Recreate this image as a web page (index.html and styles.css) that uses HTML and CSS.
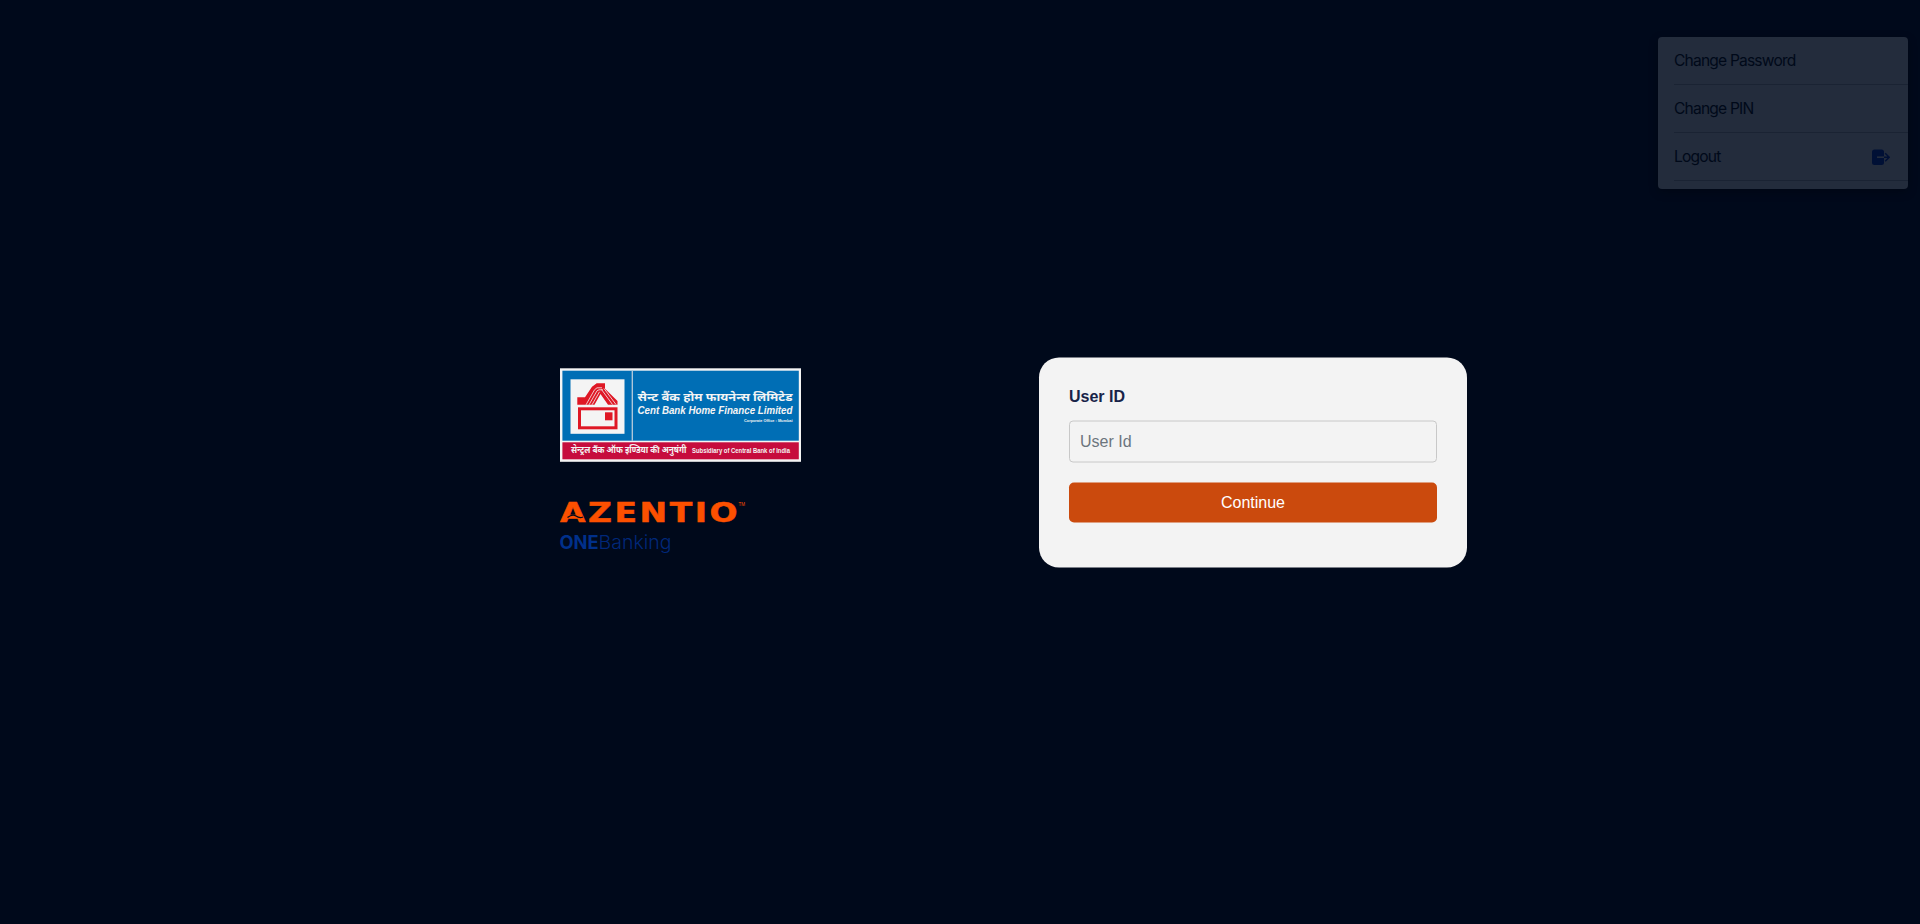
FILE: index.html
```html
<!DOCTYPE html>
<html lang="en">
<head>
<meta charset="utf-8">
<title>OneBanking</title>
<link rel="stylesheet" href="styles.css">
</head>
<body>
<main class="stage">
  <section class="brand">
    <svg class="bank-logo" viewBox="0 0 241 94" role="img" aria-label="Cent Bank Home Finance Limited">
      <rect y=".3" width="241" height="93.5" fill="#f4f4f4"/>
      <rect x="2.4" y="2.700" width="236.4" height="70" fill="#006eb5"/>
      <rect x="2.4" y="74.300" width="236.4" height="17" fill="#c60c3d"/>
      <path d="M72.3 2.700v70" stroke="#b9cbdc" stroke-width="1.3"/>
      <rect x="10.5" y="11.300" width="54" height="54.5" fill="#f4f4f4"/>
      <path d="M17.300 36.800v-7.500H25l7-10.500 4.700-3.500H45v5.500L57.500 33v3.800H48L40.500 26l-6 10.800z" fill="#df1825"/>
      <path d="M26 36.800l8.500-15 2.500-2h5M29 36.800l8-14 2-1h4M32 36.800l7.500-13M44 20.500l12 16M41.500 21.500l11 15" fill="none" stroke="#f4f4f4" stroke-width=".8"/>
      <rect x="19.500" y="40.800" width="36.500" height="19" fill="none" stroke="#df1825" stroke-width="3"/>
      <rect x="45" y="44.300" width="7.500" height="8" fill="#df1825"/>
      <g fill="#f4f4f4">
        <text class="hindi" x="77.500" y="33" font-size="11.500" textLength="155" lengthAdjust="spacingAndGlyphs">सैन्ट बैंक होम फायनेन्स लिमिटेड</text>
        <text class="bank-name" x="77.500" y="46.300" textLength="155" lengthAdjust="spacingAndGlyphs">Cent Bank Home Finance Limited</text>
        <text class="office" x="184" y="54.300" textLength="48.500" lengthAdjust="spacingAndGlyphs">Corporate Office : Mumbai</text>
        <text class="hindi" x="11" y="85" font-size="8.800" textLength="115.500" lengthAdjust="spacingAndGlyphs">सेन्ट्रल बैंक ऑफ इण्डिया की अनुषंगी</text>
        <text class="subsidiary" x="132" y="85" textLength="98" lengthAdjust="spacingAndGlyphs">Subsidiary of Central Bank of India</text>
      </g>
    </svg>
    <svg class="product-logo" viewBox="0 0 190 56" role="img" aria-label="Azentio ONEBanking">
      <text class="azentio" y="21.500" textLength="180" lengthAdjust="spacingAndGlyphs">AZENTIO</text>
      <path d="M7.500 17.500q5-4 8.500-1.500t7 1" fill="none" stroke="#000919" stroke-width="1.300"/>
      <text class="trademark" x="178.500" y="5.500">TM</text>
      <text class="one" x="-.5" y="49" textLength="39" lengthAdjust="spacingAndGlyphs">ONE</text>
      <text class="banking" x="38.500" y="49" textLength="73" lengthAdjust="spacingAndGlyphs">Banking</text>
    </svg>
  </section>
  <form class="card">
    <label class="label" for="user">User ID</label>
    <input class="field" id="user" type="text" placeholder="User Id">
    <button class="continue" type="button">Continue</button>
  </form>
</main>
<nav class="menu">
  <div class="item">Change Password</div>
  <div class="item">Change PIN</div>
  <div class="item">Logout
    <svg class="exit" viewBox="0 0 18 16"><rect width="12" height="15.500" y=".5" rx="2.500" fill="#001035"/><path d="M5 8.200h7" stroke="#232c3c" stroke-width="1.600"/><path d="M12 8.200h5M13.200 4.200L17.200 8.200l-4 4" fill="none" stroke="#001035" stroke-width="1.500"/></svg>
  </div>
</nav>
</body>
</html>
```
FILE: styles.css
```css
* { box-sizing: border-box; }
body {
  margin: 0;
  height: 100vh;
  overflow: hidden;
  background: #00091b;
  font-family: "Liberation Sans", Arial, sans-serif;
}
.stage {
  height: 100%;
  display: flex;
  justify-content: center;
  align-items: center;
  gap: 238px;
  padding-left: 107px;
}
.brand { display: flex; flex-direction: column; gap: 38px; width: 241px; }
.bank-logo { display: block; width: 241px; height: 94px; }
.product-logo { display: block; width: 190px; height: 56px; overflow: visible; }
.hindi { font-family: "Noto Sans Devanagari", "Noto Sans", sans-serif; font-weight: 700; }
.bank-name { font-size: 10px; font-weight: 700; font-style: italic; }
.office { font-size: 3.8px; font-weight: 700; }
.subsidiary { font-size: 7.5px; font-weight: 700; }
.azentio { font-family: "DejaVu Sans", sans-serif; font-size: 26px; font-weight: 700; letter-spacing: 2px; fill: #fc5000; stroke: #fc5000; stroke-width: .5px; }
.trademark { font-size: 4.5px; fill: #fc5000; }
.one, .banking { font-family: Inter, sans-serif; font-size: 18.5px; fill: #00308b; }
.one { font-weight: 700; }
.banking { font-weight: 300; fill: #00287a; }
.card {
  width: 428px;
  height: 210px;
  padding: 30px;
  border-radius: 20px;
  background: #f3f3f3;
  display: flex;
  flex-direction: column;
  transform: translateY(.5px);
}
.label { font-size: 16px; line-height: 18px; font-weight: 700; color: #172348; margin-bottom: 15px; }
.field {
  height: 42px;
  padding: 0 10px;
  border: 1px solid #c8c8c8;
  border-radius: 4px;
  background: transparent;
  font: 16px "Liberation Sans", Arial, sans-serif;
}
.field::placeholder { color: #6c757d; opacity: 1; }
.continue {
  height: 40px;
  margin-top: 20px;
  border: 0;
  border-radius: 5px;
  background: #cb4a0d;
  color: #fff;
  font: 16px "Liberation Sans", Arial, sans-serif;
}
.menu {
  position: absolute;
  top: 37px;
  right: 12px;
  width: 250px;
  padding: 0 0 8px 16px;
  border-radius: 4px;
  background: #232c3c;
  box-shadow: 0 3px 10px rgba(0, 0, 0, .25);
  color: #000919;
  font: 15.6px Inter, sans-serif;
  letter-spacing: -.82px;
}
.item {
  height: 48px;
  padding-right: 18px;
  border-bottom: 1px solid #1a2333;
  display: flex;
  align-items: center;
  justify-content: space-between;
}
.exit { width: 18px; height: 16px; }
```
